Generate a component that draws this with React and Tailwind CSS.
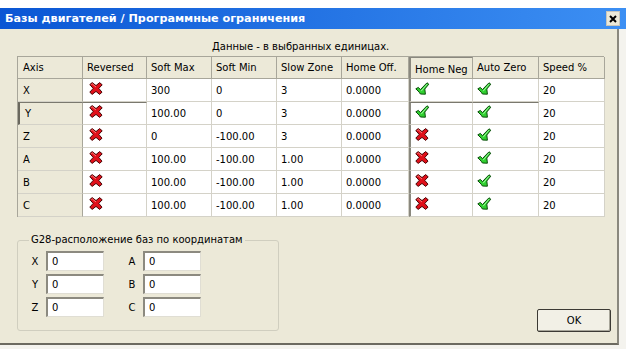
import React from "react";

const F = { fontFamily: '"DejaVu Sans", "Liberation Sans", sans-serif' };

function RedX() {
  return (
    <svg width="14" height="13" viewBox="0 0 14 13">
      <path
        d="M0.8 2.6 L3.2 0.6 L7 3.6 L10.6 0.6 L13.2 2.8 L9.8 6.4 L13 10.2 L10.6 12.4 L7 9.4 L3.2 12.4 L0.8 10.2 L4.2 6.4 Z"
        fill="#e0101a"
        stroke="#4a0606"
        strokeWidth="1"
        strokeLinejoin="round"
      />
      <path d="M2.4 2.6 L3.2 1.8 L7 5" stroke="#ff7a7a" strokeWidth="1" fill="none" />
    </svg>
  );
}

function Check() {
  return (
    <svg width="15" height="13" viewBox="0 0 15 13">
      <path
        d="M0.8 6.8 L3.4 5.4 L5.4 7.6 L12 0.8 L13.8 2.2 L9.8 7 L10.4 12.2 L5.4 12 L4.2 10.2 Z"
        fill="#2fd02f"
        stroke="#0b4d0b"
        strokeWidth="1"
        strokeLinejoin="round"
      />
      <path d="M6.2 9.2 L12 2.2" stroke="#a0f5a0" strokeWidth="1" fill="none" />
    </svg>
  );
}

const headers = ["Axis", "Reversed", "Soft Max", "Soft Min", "Slow Zone", "Home Off.", "Home Neg", "Auto Zero", "Speed %"];

const rows = [
  ["X", "x", "300", "0", "3", "0.0000", "c", "c", "20"],
  ["Y", "x", "100.00", "0", "3", "0.0000", "c", "c", "20"],
  ["Z", "x", "0", "-100.00", "3", "0.0000", "x", "c", "20"],
  ["A", "x", "100.00", "-100.00", "1.00", "0.0000", "x", "c", "20"],
  ["B", "x", "100.00", "-100.00", "1.00", "0.0000", "x", "c", "20"],
  ["C", "x", "100.00", "-100.00", "1.00", "0.0000", "x", "c", "20"],
];

function Cell({ v, col, row }) {
  const isIcon = v === "x" || v === "c";
  let cls = "h-[23px] border-r border-b border-[#d4d2c8] flex items-center ";
  if (col === 0) cls += "bg-[#ece9d8] border-r-[#a8a69a] pl-[5px] ";
  else cls += "bg-white pl-[4px] ";
  if (col === 6) cls += "border-l-2 border-l-[#8a887e] ";
  if (row === 1 && (col === 0 || col === 1 || col === 6 || col === 7)) cls += "border-t border-t-[#7a786e] ";
  if (row === 1 && col === 0) cls += "border-l-2 border-l-[#6a685e] ";
  if (isIcon) cls += col === 1 ? "pl-[6px] pb-[4px] " : "pb-[4px] ";
  return <div className={cls}>{v === "x" ? <RedX /> : v === "c" ? <Check /> : v}</div>;
}

function Field({ label, value }) {
  return (
    <div className="flex items-center h-[20px]">
      <div className="w-[22px] text-center">{label}</div>
      <div className="w-[58px] h-[20px] bg-white border-t-2 border-l-2 border-t-[#8c8a80] border-l-[#8c8a80] border-r border-b border-r-[#e0ded4] border-b-[#e0ded4] flex items-center pl-[4px]">
        {value}
      </div>
    </div>
  );
}

export default function App() {
  return (
    <div className="w-[626px] h-[349px] bg-[#f4f3ee] overflow-hidden text-[10px] text-black" style={F}>
      <div className="h-[8px] bg-white" />
      <div className="h-[21px] bg-linear-to-r from-[#0a56d4] to-[#3c8ff3] flex items-center justify-between pl-[5px] pr-[6px]">
        <div className="text-white font-bold text-[11.2px] leading-none" style={F}>
          Базы двигателей / Программные ограничения
        </div>
        <div className="w-[14px] h-[15px] bg-[#ece9d8] border border-[#c8c6ba] flex items-center justify-center">
          <svg width="8" height="8" viewBox="0 0 8 8">
            <path d="M1 1 L7 7 M7 1 L1 7" stroke="#000" strokeWidth="2" />
          </svg>
        </div>
      </div>
      <div className="w-[619px] h-[316px] bg-[#ece9d8] border-r-2 border-b-2 border-r-[#8a887e] border-b-[#6c6a60] flex flex-col">
        <div className="pt-[12px] pl-[212px] h-[24px] leading-[12px]">Данные - в выбранных единицах.</div>
        <div className="ml-[17px] mt-[3px] w-[587px] border-t border-l border-[#a8a69a] grid grid-cols-[65px_64px_65px_65px_65px_67px_64px_66px_66px]">
          {headers.map((h, i) => (
            <div
              key={h}
              className={
                "h-[22px] bg-[#ece9d8] border-r border-b border-[#a8a69a] flex items-center " +
                (i === 0 ? "pl-[5px] " : "pl-[4px] ") +
                (i === 6 ? "border-l-2 border-l-[#8a887e] border-t border-t-[#8a887e] pt-[2px] " : "")
              }
            >
              {h}
            </div>
          ))}
          {rows.map((r, ri) => r.map((v, ci) => <Cell key={ri + "-" + ci} v={v} col={ci} row={ri} />))}
        </div>
        <div className="flex items-end justify-between mt-[17px] pl-[17px] pr-[6px]">
          <fieldset className="w-[262px] h-[97px] border border-[#d0cebf] rounded-[3px] pl-[6px] pt-[5px]">
            <legend className="ml-[5px] px-[2px] leading-[12px]">G28-расположение баз по координатам</legend>
            <div className="flex gap-[17px]">
              <div className="flex flex-col gap-[3px]">
                <Field label="X" value="0" />
                <Field label="Y" value="0" />
                <Field label="Z" value="0" />
              </div>
              <div className="flex flex-col gap-[3px]">
                <Field label="A" value="0" />
                <Field label="B" value="0" />
                <Field label="C" value="0" />
              </div>
            </div>
          </fieldset>
          <div className="w-[74px] h-[23px] mb-[-1px] bg-[#f2f0e6] border border-[#3c3a34] rounded-[2px] shadow-[inset_-1px_-1px_0_#a8a69a] flex items-center justify-center">
            OK
          </div>
        </div>
      </div>
    </div>
  );
}
